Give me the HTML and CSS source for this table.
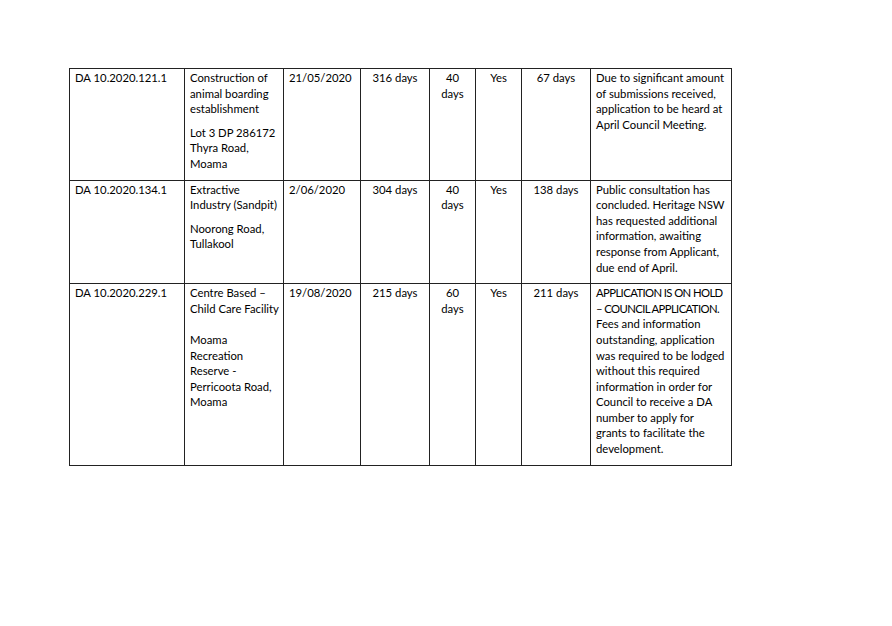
FILE: index.html
```html
<!DOCTYPE html>
<html>
<head>
<meta charset="utf-8">
<link rel="stylesheet" href="styles.css">
</head>
<body>
<div class="page">
<table class="da-table">
  <colgroup>
    <col class="c-id"><col class="c-desc"><col class="c-date"><col class="c-days"><col class="c-stat"><col class="c-yes"><col class="c-elap"><col class="c-note">
  </colgroup>
  <tr>
    <td>DA 10.2020.121.1</td>
    <td class="soft-l"><p>Construction of<br>animal boarding<br>establishment</p><p>Lot 3 DP 286172<br>Thyra Road,<br>Moama</p></td>
    <td class="mid-l">21/05/2020</td>
    <td class="ctr mid-l2">316 days</td>
    <td class="ctr">40<br>days</td>
    <td class="ctr">Yes</td>
    <td class="ctr">67 days</td>
    <td><p>Due to significant amount<br>of submissions received,<br>application to be heard at<br>April Council Meeting.</p></td>
  </tr>
  <tr>
    <td>DA 10.2020.134.1</td>
    <td class="soft-l"><p>Extractive<br>Industry (Sandpit)</p><p>Noorong Road,<br>Tullakool</p></td>
    <td class="mid-l">2/06/2020</td>
    <td class="ctr mid-l2">304 days</td>
    <td class="ctr">40<br>days</td>
    <td class="ctr">Yes</td>
    <td class="ctr">138 days</td>
    <td><p>Public consultation has<br>concluded. Heritage NSW<br>has requested additional<br>information, awaiting<br>response from Applicant,<br>due end of April.</p></td>
  </tr>
  <tr>
    <td>DA 10.2020.229.1</td>
    <td class="soft-l"><p>Centre Based –<br>Child Care Facility<br><br>Moama<br>Recreation<br>Reserve -<br>Perricoota Road,<br>Moama</p></td>
    <td class="mid-l">19/08/2020</td>
    <td class="ctr mid-l2">215 days</td>
    <td class="ctr">60<br>days</td>
    <td class="ctr">Yes</td>
    <td class="ctr">211 days</td>
    <td><p><span class="caps">APPLICATION IS ON HOLD<br>– COUNCIL APPLICATION.</span><br>Fees and information<br>outstanding, application<br>was required to be lodged<br>without this required<br>information in order for<br>Council to receive a DA<br>number to apply for<br>grants to facilitate the<br>development.</p></td>
  </tr>
</table>
</div>
</body>
</html>
```
FILE: styles.css
```css
html, body {
  margin: 0;
  padding: 0;
  background: #fff;
}
.page {
  padding: 68px 0 0 69px;
}
.da-table {
  border-collapse: collapse;
  table-layout: fixed;
  width: 662px;
  font-family: Lato, "Liberation Sans", sans-serif;
  font-size: 11.3px;
  line-height: 15.6px;
  color: #000;
}
.c-id { width: 115px; }
.c-desc { width: 99px; }
.c-date { width: 77px; }
.c-days { width: 69px; }
.c-stat { width: 46px; }
.c-yes { width: 46px; }
.c-elap { width: 69px; }
.c-note { width: 141px; }
.da-table td {
  border: 1px solid #222;
  vertical-align: top;
  padding: 1px 4px 8px 5px;
  text-align: left;
  white-space: nowrap;
}
.da-table td p {
  margin: 0 0 8px;
}
.da-table td p:last-child {
  margin-bottom: 0;
}
.da-table td .caps {
  letter-spacing: -0.6px;
}
.da-table td.ctr {
  text-align: center;
  padding-left: 5px;
  padding-right: 5px;
}
.da-table td.soft-l {
  border-left-color: #b0b0b0;
}
.da-table td.mid-l {
  border-left-color: #777;
}
.da-table td.mid-l2 {
  border-left-color: #999;
}
```
